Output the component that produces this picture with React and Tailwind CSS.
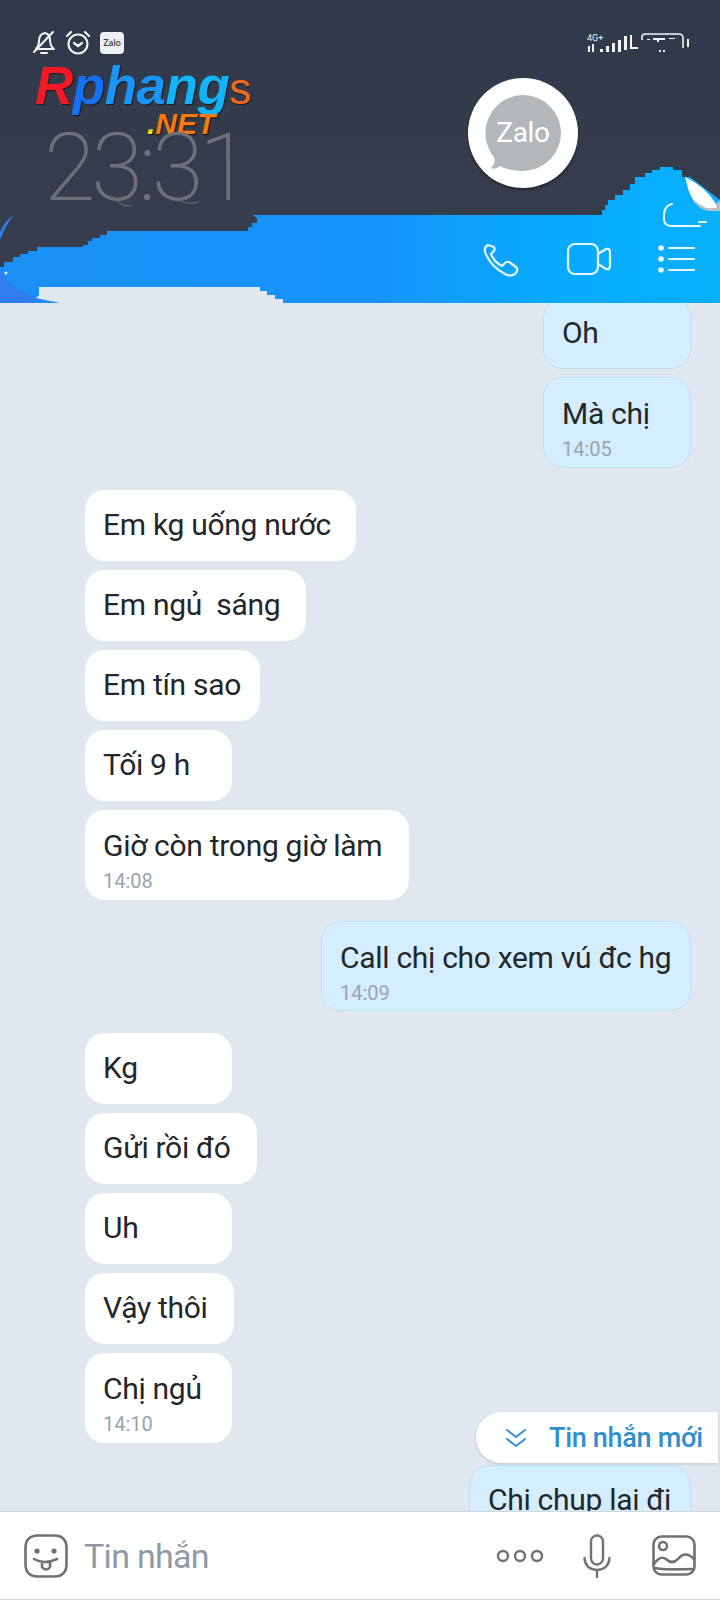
const font = { fontFamily: "Roboto, 'Noto Sans', sans-serif" };

const groups = [
  {
    side: "right",
    gap: "gap-[8px]",
    mt: "mt-[-5px]",
    items: [
      { text: "Oh", w: "w-[148px]", pt: "pt-[15px]" },
      { text: "Mà chị", time: "14:05", w: "w-[148px]", h: "h-[91px]" },
    ],
  },
  {
    side: "left",
    gap: "gap-[9px]",
    mt: "mt-[22px]",
    items: [
      { text: "Em kg uống nước", w: "w-[271px]" },
      { text: "Em ngủ  sáng", w: "w-[221px]" },
      { text: "Em tín sao", w: "w-[175px]" },
      { text: "Tối 9 h", w: "w-[147px]" },
      { text: "Giờ còn trong giờ làm", time: "14:08", w: "w-[324px]" },
    ],
  },
  {
    side: "right",
    gap: "gap-[9px]",
    mt: "mt-[21px]",
    items: [{ text: "Call chị cho xem vú đc hg", time: "14:09", w: "w-[370px]" }],
  },
  {
    side: "left",
    gap: "gap-[9px]",
    mt: "mt-[22px]",
    items: [
      { text: "Kg", w: "w-[147px]" },
      { text: "Gửi rồi đó", w: "w-[172px]" },
      { text: "Uh", w: "w-[147px]" },
      { text: "Vậy thôi", w: "w-[149px]" },
      { text: "Chị ngủ", time: "14:10", w: "w-[147px]" },
    ],
  },
  {
    side: "right",
    gap: "gap-[9px]",
    mt: "mt-[22px]",
    items: [{ text: "Chị chụp lại đi", w: "w-[222px]", pt: "pt-[15px]" }],
  },
];

const Bubble = ({ side, text, time, w, h, pt }) => (
  <div
    className={`${w} rounded-[20px] px-[18px] ${time ? `${h || "h-[90px]"} pt-[17px]` : `h-[71px] ${pt || "pt-[16px]"}`} ${
      side === "right" ? "bg-[#d4eeff] border border-[#bfe0f2]" : "bg-white"
    }`}
  >
    <div className="text-[30px] leading-[38px] text-[#23272b] whitespace-pre tracking-[-0.3px]">{text}</div>
    {time && <div className="text-[20px] leading-[26px] mt-[3px] text-[#9aa4ad]">{time}</div>}
  </div>
);

const HeaderArt = () => (
  <svg className="absolute inset-0" width="720" height="303" viewBox="0 0 720 303">
    <defs>
      <linearGradient id="band" x1="0" x2="1" y1="0" y2="0">
        <stop offset="0" stopColor="#1a8ff6" />
        <stop offset="0.55" stopColor="#1596fb" />
        <stop offset="0.75" stopColor="#08a9fe" />
        <stop offset="1" stopColor="#09b0fc" />
      </linearGradient>
    </defs>
    <path d="M0 232Q5 220 14 215Q6 224 0 240Z" fill="#2f7df0" />
    <path
      d="M0 267H4V262H13V257H20V254H28V251H37V247H83V245H88V241H92V238H100V235H107V231H248V227H252V223H257V218L253 215H602V210H605V205H608V200H615V195H623V190H630V184H635V177H645V173H652V170H660V167H673V170H682V177H690L720 200V303H0Z"
      fill="url(#band)"
    />
    <path d="M0 270Q8 285 36 298V303H0Z" fill="#2f7df0" />
    <path d="M39 287H260V291H267V295H275V299H283V303H60L36 298L39 295Z" fill="#e1e7ef" />
    <circle cx="6" cy="273" r="1.5" fill="#dff1ff" />
    <path d="M685 177Q705 186 716 204L718 210H706L695 203L689 192Z" fill="#ffffff" />
    <path d="M692 199L700 208L708 211H720V200L716 204L718 208H706Z" fill="#b9c0c6" />
    <path
      d="M672 204Q664 206 664 215V219Q664 226 672 226H700M699 222H706"
      fill="none"
      stroke="#e8f7ff"
      strokeWidth="2"
      strokeLinecap="round"
    />
    <g fill="none" stroke="#e6f6ff" strokeWidth="2.2" strokeLinecap="round" strokeLinejoin="round">
      <path d="M488 245Q484 247 485 252Q490 266 505 274Q510 277 515 274Q519 270 516 267L509 262Q506 261 504 264L502 266Q494 262 491 254L494 251Q495 249 494 247Z" />
      <rect x="568" y="244" width="30" height="30" rx="7" />
      <path d="M598 254L606 249Q610 248 610 252V266Q610 270 606 269L598 264" />
      <path d="M669 248H694M669 259H694M669 270H694" />
    </g>
    <g fill="#e6f6ff">
      <circle cx="661" cy="248" r="2.8" />
      <circle cx="661" cy="259" r="2.8" />
      <circle cx="661" cy="270" r="2.8" />
    </g>
    <g fill="none" stroke="#55585f" strokeWidth="2" strokeLinecap="round">
      <path d="M113 197Q122 207 131 206M175 198Q188 206 198 202" />
    </g>
  </svg>
);

const StatusLeft = () => (
  <div className="flex items-center h-[26px] gap-[9px]">
    <svg width="24" height="26" viewBox="0 0 24 26" fill="none" stroke="#f2f3f4" strokeWidth="2" strokeLinecap="round" strokeLinejoin="round">
      <path d="M4 19Q7 16 7 11Q7 4 13 3Q18 4 18 10Q18 16 22 19Z" />
      <path d="M9 23H15M2 22L21 2" />
    </svg>
    <svg width="26" height="26" viewBox="0 0 26 26" fill="none" stroke="#f2f3f4" strokeWidth="2.2" strokeLinecap="round">
      <circle cx="13" cy="14" r="9.5" />
      <path d="M9 13L13 16L17 13M2 6L6 2M24 6L20 2" />
    </svg>
    <div className="w-[24px] h-[22px] bg-[#eef0f2] rounded-[4px] text-[9px] leading-[22px] text-center text-[#444] font-medium">Zalo</div>
  </div>
);

const Logo = () => (
  <div className="w-[230px] h-[76px] ml-[3px]">
    <div className="text-[53px] leading-[48px] font-black italic tracking-[-0.5px] whitespace-nowrap [font-family:'Liberation_Sans',sans-serif] [text-shadow:1px_1px_1px_#1a1a22]">
      <span className="text-[#f01a24]">R</span>
      <span className="text-[#1670f2]">p</span>
      <span className="text-[#1a94f6]">ha</span>
      <span className="text-[#12b4f8]">ng</span>
      <span className="text-[#ef6a1c] font-normal not-italic text-[44px]">s</span>
    </div>
    <div className="ml-[112px] mt-[-4px] text-[30px] leading-[30px] font-bold italic text-[#f57a10] [font-family:'Liberation_Sans',sans-serif] [text-shadow:1px_1px_1px_#111]">
      <span className="text-[#f0e020]">.</span>NET
    </div>
  </div>
);

const StatusRight = () => (
  <svg width="104" height="24" viewBox="0 0 104 24" fill="#f2f3f4">
    <text x="0" y="9" fontSize="9" fontFamily="Roboto, sans-serif">4G+</text>
    <path d="M1 14h2v6H1zM5 12h2v8H5zM13 17h3v3h-3zM19 14h3v6h-3zM25 11h3v9h-3zM31 8h3v12h-3zM37 4h3v14h-3zM43 3h2v12h6v2h-8z" />
    <path d="M55 8V5Q55 2 58 2H92Q96 2 96 6V16" fill="none" stroke="#f2f3f4" strokeWidth="1.6" />
    <path d="M60 7h3v1h-3zM66 6h12v2h-12zM70 8h2v2h-2zM82 6h6v1h-6zM72 18h2v2h-2zM76 18h2v2h-2zM100 7h2v8h-2z" />
  </svg>
);

const Header = () => (
  <header className="relative z-10 h-[303px] shrink-0 bg-gradient-to-b from-[#2f394a] to-[#3a3f4e] overflow-hidden">
    <HeaderArt />
    <div className="relative flex justify-between pt-[30px] pl-[32px] pr-[29px]">
      <div>
        <StatusLeft />
        <div className="mt-[6px]">
          <Logo />
        </div>
        <div className="ml-[12px] mt-[-17px] text-[94px] leading-[94px] font-extralight tracking-[-4.5px] text-[#6d7076] whitespace-nowrap">
          23:31
        </div>
      </div>
      <div className="pt-[2px]">
        <StatusRight />
        <div className="mt-[22px] ml-[-119px] w-[110px] h-[110px] rounded-full bg-white shadow-[0_2px_3px_rgba(0,0,0,0.4)] flex items-center justify-center">
          <div className="relative w-[76px] h-[76px] flex items-center justify-center text-white text-[28px] tracking-[-0.3px]">
            <svg className="absolute inset-0" width="76" height="80" viewBox="0 0 76 80">
              <path d="M38 0A38 38 0 1 1 38 76Q24 76 15 71Q10 75 6 73Q11 68 9 62A38 38 0 0 1 38 0Z" fill="#b4b7ba" />
            </svg>
            <span className="relative">Zalo</span>
          </div>
        </div>
      </div>
    </div>
  </header>
);

const NewMessagePill = () => (
  <div className="absolute left-[476px] top-[1412px] z-20 w-[242px] h-[51px] rounded-l-full bg-white shadow-[0_1px_3px_rgba(0,0,0,0.15)] flex items-center pl-[29px]">
    <svg width="22" height="20" viewBox="0 0 22 20" fill="none" stroke="#2f93d6" strokeWidth="2" strokeLinecap="round" strokeLinejoin="round">
      <path d="M2 2L11 9L20 2M2 11L11 18L20 11" />
    </svg>
    <span className="ml-[22px] text-[27px] leading-[34px] font-medium text-[#2f8fd0] whitespace-nowrap tracking-[-0.3px]">Tin nhắn mới</span>
  </div>
);

const Composer = () => (
  <footer className="h-[89px] shrink-0 bg-white border-t border-b border-[#d4d6d9] flex items-center pl-[24px] pr-[24px]">
    <svg width="44" height="44" viewBox="0 0 44 44" fill="none" stroke="#6f7174" strokeWidth="2.6" strokeLinecap="round" strokeLinejoin="round">
      <path d="M14 1.5H30Q42.5 1.5 42.5 14V30Q42.5 42.5 30 42.5H14Q1.5 42.5 1.5 30V14Q1.5 1.5 14 1.5Z" />
      <circle cx="13" cy="17" r="2.6" fill="#6f7174" stroke="none" />
      <circle cx="30" cy="17" r="2.6" fill="#6f7174" stroke="none" />
      <path d="M10 25Q20 31 33 25M18 28V33Q22 38 26 33V28" />
    </svg>
    <span className="ml-[16px] text-[34px] leading-[40px] text-[#8f9aa5] tracking-[-0.7px]">Tin nhắn</span>
    <div className="ml-auto flex items-center">
      <svg width="48" height="14" viewBox="0 0 48 14" fill="none" stroke="#6f7174" strokeWidth="2.4">
        <circle cx="7" cy="7" r="5" />
        <circle cx="24" cy="7" r="5" />
        <circle cx="41" cy="7" r="5" />
      </svg>
      <svg className="ml-[39px]" width="28" height="44" viewBox="0 0 28 44" fill="none" stroke="#6f7174" strokeWidth="2.4" strokeLinecap="round">
        <rect x="8" y="1.5" width="12" height="29" rx="6" />
        <path d="M1.5 24Q2 35 14 36Q26 35 26.5 24M14 36V43" />
      </svg>
      <svg className="ml-[41px]" width="44" height="41" viewBox="0 0 44 41" fill="none" stroke="#6f7174" strokeWidth="2.6" strokeLinecap="round" strokeLinejoin="round">
        <rect x="1.5" y="1.5" width="41" height="38" rx="8" />
        <circle cx="11" cy="11" r="4" />
        <path d="M2 29Q8 20 14 24Q20 30 26 24Q33 15 42 24M3 33Q10 35 40 34" />
      </svg>
    </div>
  </footer>
);

export default function App() {
  return (
    <div className="relative w-[720px] h-[1600px] flex flex-col overflow-hidden bg-[#e1e7ef]" style={font}>
      <Header />
      <main className="flex-1 overflow-hidden">
        <div className="flex flex-col pl-[85px] pr-[29px]">
          {groups.map((g, i) => (
            <div key={i} className={`flex flex-col ${g.mt} ${g.gap} ${g.side === "right" ? "items-end" : "items-start"}`}>
              {g.items.map((m, j) => (
                <Bubble key={j} side={g.side} {...m} />
              ))}
            </div>
          ))}
        </div>
      </main>
      <NewMessagePill />
      <Composer />
    </div>
  );
}
